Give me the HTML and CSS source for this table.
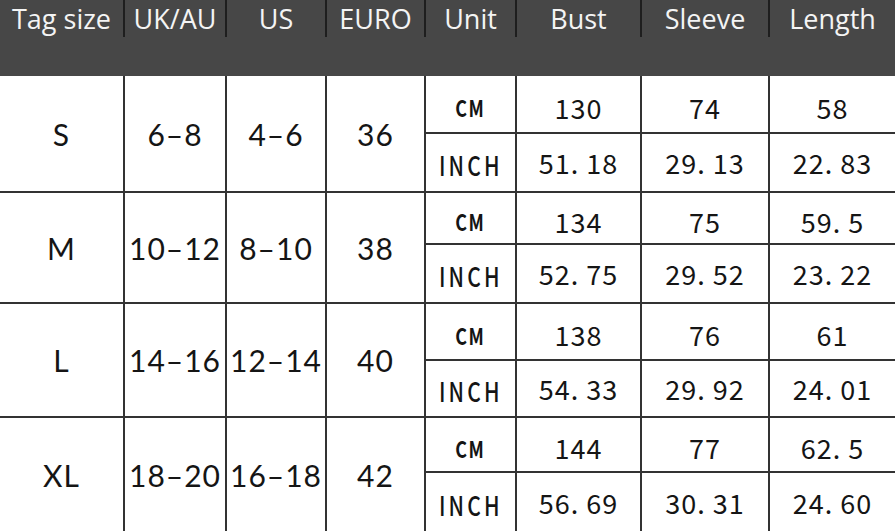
FILE: index.html
```html
<!DOCTYPE html>
<html>
<head>
<meta charset="utf-8">
<link rel="stylesheet" href="styles.css">
</head>
<body>
<div class="sheet">
  <div class="head">
    <div class="heads">
      <div class="hc">Tag size</div>
      <div class="hc">UK/AU</div>
      <div class="hc">US</div>
      <div class="hc">EURO</div>
      <div class="hc">Unit</div>
      <div class="hc">Bust</div>
      <div class="hc">Sleeve</div>
      <div class="hc">Length</div>
    </div>
  </div>
  <div class="body">
    <div class="c big span">S</div>
    <div class="c big span">6–8</div>
    <div class="c big span">4–6</div>
    <div class="c big span">36</div>
    <div class="c unit cm top"><span>CM</span></div>
    <div class="c num top">130</div>
    <div class="c num top">74</div>
    <div class="c num top">58</div>
    <div class="c unit inch"><span>INCH</span></div>
    <div class="c num">51. 18</div>
    <div class="c num">29. 13</div>
    <div class="c num">22. 83</div>

    <div class="c big span">M</div>
    <div class="c big span">10–12</div>
    <div class="c big span">8–10</div>
    <div class="c big span">38</div>
    <div class="c unit cm top"><span>CM</span></div>
    <div class="c num top">134</div>
    <div class="c num top">75</div>
    <div class="c num top">59. 5</div>
    <div class="c unit inch"><span>INCH</span></div>
    <div class="c num">52. 75</div>
    <div class="c num">29. 52</div>
    <div class="c num">23. 22</div>

    <div class="c big span">L</div>
    <div class="c big span">14–16</div>
    <div class="c big span">12–14</div>
    <div class="c big span">40</div>
    <div class="c unit cm top"><span>CM</span></div>
    <div class="c num top">138</div>
    <div class="c num top">76</div>
    <div class="c num top">61</div>
    <div class="c unit inch"><span>INCH</span></div>
    <div class="c num">54. 33</div>
    <div class="c num">29. 92</div>
    <div class="c num">24. 01</div>

    <div class="c big span">XL</div>
    <div class="c big span">18–20</div>
    <div class="c big span">16–18</div>
    <div class="c big span">42</div>
    <div class="c unit cm top"><span>CM</span></div>
    <div class="c num top">144</div>
    <div class="c num top">77</div>
    <div class="c num top">62. 5</div>
    <div class="c unit inch"><span>INCH</span></div>
    <div class="c num">56. 69</div>
    <div class="c num">30. 31</div>
    <div class="c num">24. 60</div>
  </div>
</div>
</body>
</html>
```
FILE: styles.css
```css
html, body {
  margin: 0;
  padding: 0;
  background: #ffffff;
}
.sheet {
  width: 895px;
  height: 531px;
  overflow: hidden;
}
.head {
  height: 76px;
  background: #474747;
}
.heads {
  display: grid;
  grid-template-columns: 123px 100px 98px 97px 89px 123px 126px 125px;
  column-gap: 2px;
  height: 37px;
  background: #1e1e1e;
}
.hc {
  background: #474747;
  color: #f4f4f4;
  font-family: "Open Sans", "DejaVu Sans", sans-serif;
  font-size: 27px;
  font-weight: 500;
  line-height: normal;
  text-align: center;
  white-space: nowrap;
}
.body {
  display: grid;
  grid-template-columns: 123px 100px 98px 97px 89px 123px 126px 125px;
  grid-template-rows: 56px 57px 50px 57px 55px 55px 53px 58px;
  gap: 2px;
  background: #333333;
  height: 455px;
}
.c {
  background: #ffffff;
  color: #151515;
  display: flex;
  align-items: center;
  justify-content: center;
  white-space: nowrap;
}
.top {
  padding-top: 6px;
}
.span {
  grid-row: span 2;
}
.big {
  font-family: "Lato", "Open Sans", sans-serif;
  font-size: 30px;
  letter-spacing: 1px;
}
.unit {
  font-family: "Noto Sans CJK SC", "DejaVu Sans", sans-serif;
  font-weight: 500;
}
.unit span {
  display: inline-block;
  transform: scaleX(0.78);
}
.cm {
  font-size: 23px;
  letter-spacing: 2px;
  font-weight: 700;
}
.inch {
  font-size: 27px;
  letter-spacing: 4px;
  padding-top: 4px;
}
.num {
  font-family: "Noto Sans CJK SC", "DejaVu Sans", sans-serif;
  font-size: 27px;
  letter-spacing: 1px;
}
```
